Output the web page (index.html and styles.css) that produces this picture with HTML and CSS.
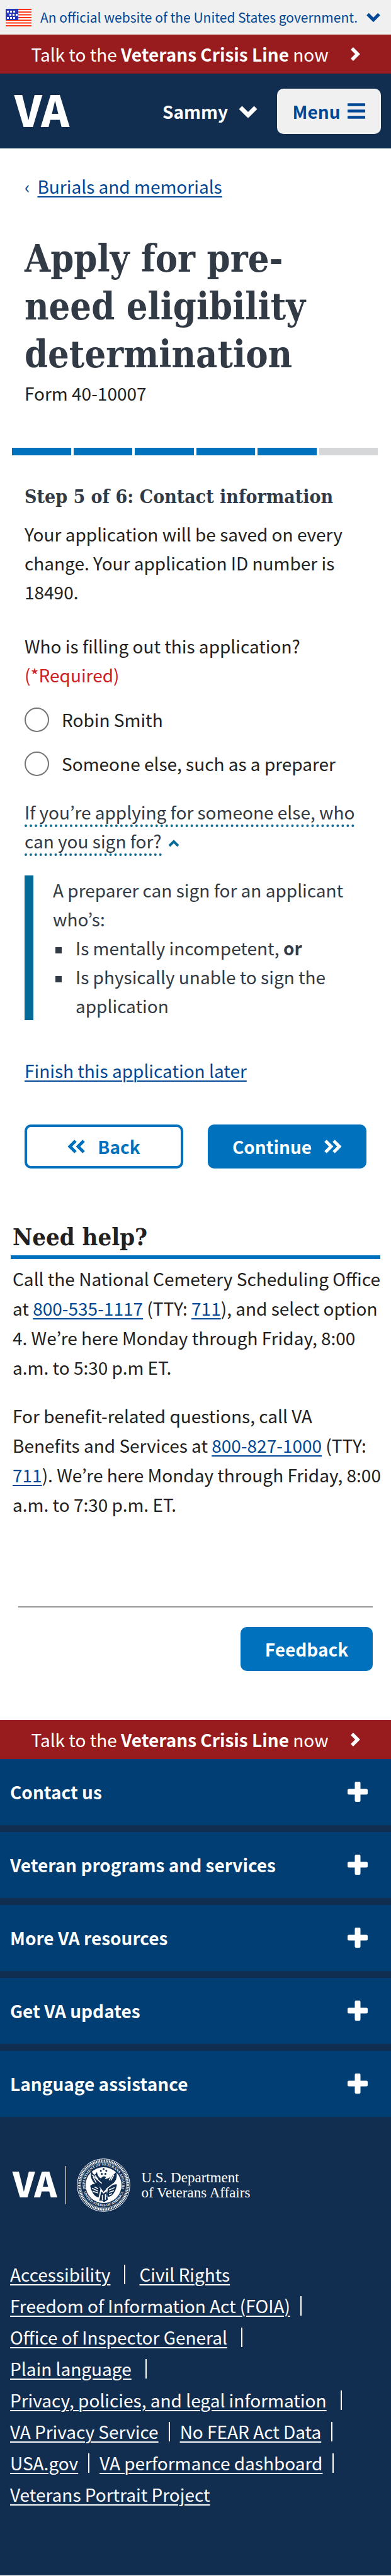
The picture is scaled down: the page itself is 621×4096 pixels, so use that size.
FILE: index.html
```html
<!DOCTYPE html>
<html lang="en">
<head>
<meta charset="utf-8">
<meta name="viewport" content="width=device-width, initial-scale=1">
<title>Apply for pre-need eligibility determination</title>
<link rel="stylesheet" href="styles.css">
</head>
<body>
<svg class="defs" aria-hidden="true">
  <symbol id="chev-down" viewBox="0 0 32 20"><path d="M4 4l12 12L28 4" fill="none" stroke="currentColor" stroke-width="7"/></symbol>
  <symbol id="chev-right" viewBox="0 0 16 24"><path d="M3 3l9 9-9 9" fill="none" stroke="currentColor" stroke-width="5.5"/></symbol>
  <symbol id="chev-up" viewBox="0 0 18 12"><path d="M2 10l7-7 7 7" fill="none" stroke="currentColor" stroke-width="4"/></symbol>
  <symbol id="dbl-right" viewBox="0 0 28 24"><path d="M2 3l9 9-9 9M15 3l9 9-9 9" fill="none" stroke="currentColor" stroke-width="5"/></symbol>
  <symbol id="dbl-left" viewBox="0 0 28 24"><path d="M26 3l-9 9 9 9M13 3l-9 9 9 9" fill="none" stroke="currentColor" stroke-width="5"/></symbol>
  <symbol id="plus" viewBox="0 0 32 32"><path d="M13.500 0h5a2 2 0 0 1 2 2v9.500H30a2 2 0 0 1 2 2v5a2 2 0 0 1-2 2h-9.500V30a2 2 0 0 1-2 2h-5a2 2 0 0 1-2-2v-9.500H2a2 2 0 0 1-2-2v-5a2 2 0 0 1 2-2h9.500V2a2 2 0 0 1 2-2z" fill="currentColor"/></symbol>
</svg>

<div class="gov">
  <svg class="flag" viewBox="0 0 41 28" aria-hidden="true">
    <rect width="41" height="28" fill="#fff"/>
    <path d="M0 1h41M0 5.300h41M0 9.600h41M0 13.900h41M0 18.200h41M0 22.500h41M0 27h41" stroke="#fa3210" stroke-width="2"/>
    <rect width="20" height="18" fill="#2737b8"/>
    <path d="M2 4.500h14M2 14.500h14" stroke="#fff" stroke-width="3" stroke-dasharray="3 2"/>
    <path d="M6 9.500h13" stroke="#fff" stroke-width="3" stroke-dasharray="3 2"/>
  </svg>
  <button class="gov-toggle" type="button">An official website of the United States government.
    <svg class="ic-gov" aria-hidden="true"><use href="#chev-down"/></svg></button>
</div>

<a class="crisis" href="#crisis"><span>Talk to the <strong>Veterans Crisis Line</strong> now</span>
  <svg class="ic-right" aria-hidden="true"><use href="#chev-right"/></svg></a>

<header class="top">
  <a class="va va-lg" href="#home">VA</a>
  <button class="user" type="button">Sammy <svg class="ic-user" aria-hidden="true"><use href="#chev-down"/></svg></button>
  <button class="menu" type="button">Menu
    <svg class="ic-menu" viewBox="0 0 28 25" aria-hidden="true"><path d="M1 2.500h26M1 12.500h26M1 22.500h26" stroke="currentColor" stroke-width="4.500" stroke-linecap="round"/></svg></button>
</header>

<main>
  <nav class="crumbs"><span>‹</span><a href="#burials">Burials and memorials</a></nav>
  <div class="title">
    <h1>Apply for pre-need eligibility determination</h1>
    <p>Form 40-10007</p>
  </div>
  <div class="progress" role="img" aria-label="Step 5 of 6">
    <i class="on"></i><i class="on"></i><i class="on"></i><i class="on"></i><i class="on"></i><i></i>
  </div>
  <form class="form">
    <h2>Step 5 of 6: Contact information</h2>
    <p>Your application will be saved on every change. Your application ID number is 18490.</p>
    <fieldset>
      <legend>Who is filling out this application? <span class="req">(*Required)</span></legend>
      <label class="radio"><input type="radio" name="who">Robin Smith</label>
      <label class="radio"><input type="radio" name="who">Someone else, such as a preparer</label>
    </fieldset>
    <button class="more" type="button"><span>If you’re applying for someone else, who can you sign for?</span> <svg class="ic-up" aria-hidden="true"><use href="#chev-up"/></svg></button>
    <div class="info">
      <p>A preparer can sign for an applicant who’s:</p>
      <ul>
        <li>Is mentally incompetent, <strong>or</strong></li>
        <li>Is physically unable to sign the application</li>
      </ul>
    </div>
    <a class="later" href="#later">Finish this application later</a>
    <div class="actions">
      <button class="btn btn-line" type="button"><svg class="ic-dbl" aria-hidden="true"><use href="#dbl-left"/></svg>Back</button>
      <button class="btn" type="button">Continue<svg class="ic-dbl" aria-hidden="true"><use href="#dbl-right"/></svg></button>
    </div>
  </form>
  <section class="help">
    <h2>Need help?</h2>
    <p>Call the National Cemetery Scheduling Office at <a href="#tel1">800-535-1117</a> (TTY: <a href="#tty">711</a>), and select option 4. We’re here Monday through Friday, 8:00 a.m. to 5:30 p.m ET.</p>
    <p>For benefit-related questions, call VA Benefits and Services at <a href="#tel2">800-827-1000</a> (TTY: <a href="#tty">711</a>). We’re here Monday through Friday, 8:00 a.m. to 7:30 p.m. ET.</p>
  </section>
  <div class="feedback"><button class="btn" type="button">Feedback</button></div>
</main>

<footer>
  <a class="crisis" href="#crisis"><span>Talk to the <strong>Veterans Crisis Line</strong> now</span>
    <svg class="ic-right" aria-hidden="true"><use href="#chev-right"/></svg></a>
  <div class="accordion">
    <button type="button">Contact us<svg class="ic-plus" aria-hidden="true"><use href="#plus"/></svg></button>
    <button type="button">Veteran programs and services<svg class="ic-plus" aria-hidden="true"><use href="#plus"/></svg></button>
    <button type="button">More VA resources<svg class="ic-plus" aria-hidden="true"><use href="#plus"/></svg></button>
    <button type="button">Get VA updates<svg class="ic-plus" aria-hidden="true"><use href="#plus"/></svg></button>
    <button type="button">Language assistance<svg class="ic-plus" aria-hidden="true"><use href="#plus"/></svg></button>
  </div>
  <a class="brand" href="#home">
    <span class="va va-sm">VA</span>
    <span class="rule"></span>
    <svg class="seal" viewBox="0 0 88 88" aria-hidden="true">
      <defs>
        <path id="arc-top" d="M14.500 50A30.500 30.500 0 1 1 73.500 50"/>
        <path id="arc-bot" d="M11.500 56A34.500 34.500 0 0 0 76.500 56"/>
      </defs>
      <circle cx="44" cy="44" r="43.300" fill="none" stroke="#fff" stroke-width="1"/>
      <circle cx="44" cy="44" r="40" fill="none" stroke="#fff" stroke-width="3.600" stroke-dasharray="1.700 1"/>
      <circle cx="44" cy="44" r="37.500" fill="none" stroke="#fff" stroke-width=".6"/>
      <circle cx="44" cy="44" r="29.500" fill="#fff"/>
      <g class="seal-text">
        <text><textPath href="#arc-top" startOffset="50%" text-anchor="middle">DEPARTMENT OF VETERANS AFFAIRS</textPath></text>
        <text><textPath href="#arc-bot" startOffset="50%" text-anchor="middle">UNITED STATES OF AMERICA</textPath></text>
      </g>
      <g fill="#112e51">
        <circle cx="44" cy="17.500" r="1.600"/><circle cx="39.500" cy="20.500" r="1.600"/><circle cx="48.500" cy="20.500" r="1.600"/><circle cx="41" cy="25.500" r="1.600"/><circle cx="47" cy="25.500" r="1.600"/>
        <path d="M33 22c1 6 3 9 7 11 1-3 5-5 8-2l-2 3c5 0 12-4 19-12 2 8 0 17-9 22l-7 6-5 5-6-8-5-3c-8-5-12-14-9-23 2 3 3 5 5 6 2-1 3-3 4-5z"/>
        <path d="M22 45c4-4 9-4 13-1l4 6-3 14c-7 0-12-9-14-19zM66 43c-5-1-12 2-15 7l-2 13c8 2 15-7 17-20zM40 54l4 4 5-4 2 14-6 4-5-3-3 1z"/>
      </g>
      <path d="M25 27l16 14M64 39L49 50M27 31l5 9M61 27l-5 9M58 28l-5 8M30 28l5 7M25 49l10 5M26 54l9 3M29 47l6 3M53 52l9-4M53 56l8-3M53 60l5-2M42 60v9M47 59v9" stroke="#fff" stroke-width="1.600" fill="none"/>
    </svg>
    <span class="dept">U.S. Department<br>of Veterans Affairs</span>
  </a>
  <nav class="links">
    <ul class="wide"><li><a href="#a">Accessibility</a></li><li class="end"><a href="#b">Civil Rights</a></li></ul>
    <ul><li><a href="#c">Freedom of Information Act (FOIA)</a></li></ul>
    <ul class="wide"><li><a href="#d">Office of Inspector General</a></li></ul>
    <ul class="wide"><li><a href="#e">Plain language</a></li></ul>
    <ul class="wide"><li><a href="#f">Privacy, policies, and legal information</a></li></ul>
    <ul><li><a href="#g">VA Privacy Service</a></li><li><a href="#h">No FEAR Act Data</a></li></ul>
    <ul><li><a href="#i">USA.gov</a></li><li><a href="#j">VA performance dashboard</a></li></ul>
    <ul><li class="end"><a href="#k">Veterans Portrait Project</a></li></ul>
  </nav>
</footer>
</body>
</html>
```
FILE: styles.css
```css
* { box-sizing: border-box; }
body {
  margin: 0;
  background: #fff;
  color: #212121;
  font: 28px/46px "Noto Sans CJK KR", "Open Sans", sans-serif;
}
p, h1, h2, ul, fieldset { margin: 0; padding: 0; border: 0; }
ul { list-style: none; }
button { margin: 0; padding: 0; border: 0; background: none; color: inherit; font: inherit; text-align: left; cursor: pointer; }
a { color: #004795; text-underline-offset: 4px; text-decoration-thickness: 2px; }
svg { flex: none; }
.defs { position: absolute; width: 0; height: 0; }

.gov { display: flex; align-items: center; height: 55px; padding: 0 16px 0 9px; background: #f0f0f0; }
.flag { width: 41px; height: 28px; margin-right: 14px; }
.gov-toggle { display: flex; flex: 1; align-items: center; justify-content: space-between; padding-bottom: 2px; color: #004795; font-size: 21px; white-space: nowrap; }
.ic-gov { width: 24px; height: 16px; }

.crisis { display: flex; align-items: center; justify-content: center; gap: 34px; height: 62px; background: #981b1e; color: #fff; text-decoration: none; }
.ic-right { width: 16px; height: 24px; }

.top { display: flex; align-items: center; height: 119px; padding: 0 16px 0 23px; background: #112e51; color: #fff; font-weight: 700; }
.va { padding-bottom: 8px; color: #fff; font-weight: 900; text-decoration: none; }
.va-lg { font-size: 68px; line-height: 68px; margin-right: auto; }
.user { display: flex; align-items: center; gap: 16px; margin-right: 30px; }
.ic-user { width: 32px; height: 20px; }
.menu { display: flex; align-items: center; justify-content: center; gap: 12px; width: 165px; height: 72px; border-radius: 10px; background: #f0f0f0; color: #004795; }
.ic-menu { width: 28px; height: 25px; }

.crumbs { display: flex; gap: 12px; padding: 37px 39px 0; color: #004795; }
.title { padding: 55px 39px 0; }
h1, h2 { font-family: "DejaVu Serif Condensed", "DejaVu Serif", serif; font-weight: 700; }
h1 { color: #323a45; font-size: 59px; line-height: 76px; }
.progress { display: grid; grid-template-columns: repeat(6, 1fr); gap: 4px; padding: 64px 21px 0 19px; }
.progress i { height: 12px; background: #d6d7d9; }
.progress .on { background: #0071bc; }

.form { padding: 43px 39px 0; }
.form h2 { margin-bottom: 13px; color: #323a45; font-size: 30px; line-height: 46px; }
fieldset { margin-top: 40px; }
legend { padding: 0; }
.req { display: block; color: #cd2026; }
.radio { display: flex; align-items: center; gap: 20px; height: 40px; margin-top: 30px; }
.radio:first-of-type { margin-top: 28px; }
.radio input { appearance: none; flex: none; width: 39px; height: 39px; margin: 0; border: 2px solid #757575; border-radius: 50%; background: #fff; }
.more { display: block; margin-top: 34px; color: #323a45; }
.more span { border-bottom: 4px dotted #046b99; }
.ic-up { width: 18px; height: 12px; margin-left: 4px; vertical-align: middle; color: #046b99; }
.info { margin-top: 32px; padding-left: 31px; border-left: 14px solid #046b99; color: #323a45; }
.info li { position: relative; padding-left: 36px; }
.info li::before { content: ""; position: absolute; left: 4px; top: 22px; width: 10px; height: 10px; background: #323a45; }
.later { display: inline-block; margin-top: 57px; }
.actions { display: grid; grid-template-columns: 1fr 1fr; gap: 39px; margin-top: 63px; }
.btn { display: flex; align-items: center; justify-content: center; gap: 20px; height: 70px; border-radius: 10px; background: #0071bc; color: #fff; font-weight: 700; }
.btn-line { border: 4px solid #0071bc; background: #fff; color: #0071bc; }
.ic-dbl { width: 28px; height: 24px; }

.help { padding: 80px 17px 0; line-height: 47px; }
.help h2 { font-size: 38px; line-height: 58px; padding-left: 3px; border-bottom: 6px solid #0071bc; }
.help p { margin-right: -3px; padding: 8px 0 0 3px; }
.help p + p { padding-top: 30px; }
.feedback { display: flex; justify-content: flex-end; margin: 138px 29px 78px; padding-top: 31px; border-top: 2px solid #969696; }
.feedback .btn { width: 210px; }

footer { background: #112e51; padding-bottom: 104px; }
.accordion { display: grid; gap: 11px; }
.accordion button { display: flex; align-items: center; justify-content: space-between; height: 105px; padding: 0 37px 2px 16px; background: #003e73; color: #fff; font-weight: 700; }
.ic-plus { width: 32px; height: 32px; }
.brand { display: flex; align-items: center; padding: 66px 20px 0; color: #fff; text-decoration: none; }
.va-sm { font-size: 55px; line-height: 55px; }
.rule { width: 1px; height: 61px; margin: 0 17px 0 14px; background: #fff; }
.seal { width: 85px; height: 85px; }
.seal-text { fill: #fff; font: 700 6px "Liberation Serif", serif; }
.dept { margin-left: 17px; font: 23px/24px "Liberation Serif", serif; }
.links { padding: 74px 16px 0; }
.links ul { display: flex; line-height: 50px; }
.links li { display: flex; align-items: center; white-space: nowrap; }
.links li::after { content: ""; width: 2px; height: 31px; margin: 0 16px; background: #fff; }
.links .wide li::after { margin: 0 22px; }
.links .end::after, .links .wide .end::after { display: none; }
.links a { color: #fff; }
```
